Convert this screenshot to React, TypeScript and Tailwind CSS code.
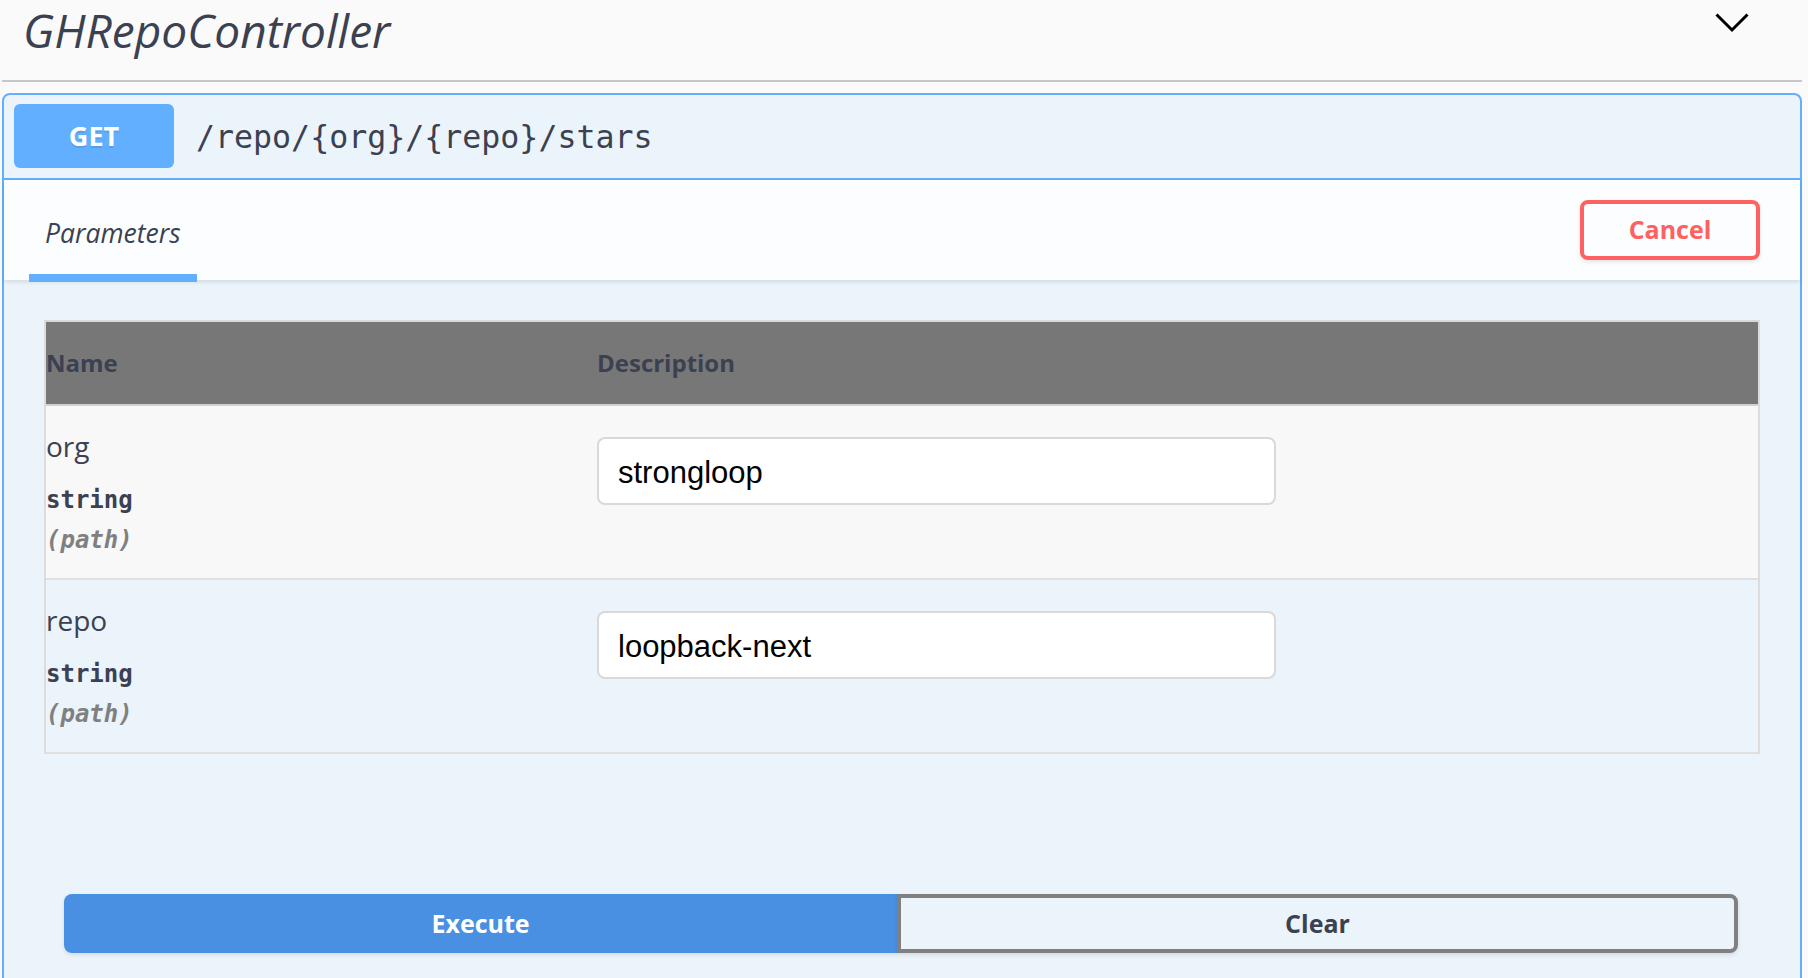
import React from "react";

const sans = "font-['Open_Sans',sans-serif]";
const mono = "font-['DejaVu_Sans_Mono',monospace]";

function ParamRow({ name, value, shaded }: { name: string; value: string; shaded: boolean }) {
  return (
    <div
      className={`grid grid-cols-[551px_1fr] pt-[20px] pb-[18px] border-b-2 border-[#e0e0e0] ${
        shaded ? "bg-[#f8f8f8]" : ""
      }`}
    >
      <div className="flex flex-col">
        <div className={`${sans} text-[28px] leading-[40px] text-[#3b4151]`}>{name}</div>
        <div className={`${mono} mt-[14px] text-[24px] leading-[40px] font-bold text-[#3b4151]`}>string</div>
        <div className={`${mono} text-[24px] leading-[40px] font-bold italic text-[#808080]`}>(path)</div>
      </div>
      <div>
        <div className="mt-[11px] flex h-[68px] w-[679px] items-center rounded-[8px] border-2 border-[#d9d9d9] bg-white pl-[19px] pt-[4px] font-['Liberation_Sans',Arial,sans-serif] text-[31px] text-black">
          {value}
        </div>
      </div>
    </div>
  );
}

export default function App() {
  return (
    <div className="h-[978px] w-[1808px] overflow-hidden bg-[#fafafa]">
      <div className="ml-[2px] flex w-[1800px] flex-col">
        {/* Tag header */}
        <div className="flex h-[82px] shrink-0 items-start justify-between border-b-2 border-[#c6c7cb] pl-[21px] pr-[53px]">
          <h3 className={`${sans} text-[46px] italic font-normal leading-[60px] text-[#3b4151]`}>GHRepoController</h3>
          <svg width="34" height="20" viewBox="0 0 34 20" className="mt-[13px]">
            <polyline points="1.5,1.5 17,17 32.5,1.5" fill="none" stroke="#000" strokeWidth="3" />
          </svg>
        </div>

        {/* Operation block */}
        <div className="mt-[11px] flex h-[960px] shrink-0 flex-col rounded-[8px] border-2 border-[#61affe] bg-[#ebf3fb]">
          {/* Summary */}
          <div className="flex items-center border-b-2 border-[#61affe] px-[10px] pt-[9px] pb-[10px]">
            <div
              className={`${sans} flex h-[64px] w-[160px] items-center justify-center rounded-[6px] bg-[#61affe] text-[27px] font-bold text-white [text-shadow:0_2px_0_rgba(0,0,0,0.1)]`}
            >
              GET
            </div>
            <div className={`${mono} ml-[22px] pt-[4px] text-[31.6px] text-[#3b4151]`}>/repo/&#123;org&#125;/&#123;repo&#125;/stars</div>
          </div>

          {/* Section header */}
          <div className="relative z-10 flex h-[100px] items-center justify-between bg-[#fbfdfe] pl-[25px] pr-[40px] shadow-[0_2px_4px_rgba(0,0,0,0.1)]">
            <div className="relative flex self-stretch items-center px-[16px] pt-[6px]">
              <span className={`${sans} text-[26.5px] italic leading-[36px] text-[#3b4151]`}>Parameters</span>
              <div className="absolute bottom-[-2px] left-0 right-0 h-[8px] bg-[#61affe]" />
            </div>
            <button
              className={`${sans} h-[60px] w-[180px] rounded-[8px] border-4 border-[#ff6060] bg-transparent text-[25px] font-bold text-[#ff6060] shadow-[0_2px_4px_rgba(0,0,0,0.1)]`}
            >
              Cancel
            </button>
          </div>

          {/* Parameters table */}
          <div className="px-[40px] pt-[40px]">
            <div className="border-x-2 border-[#dcdcdc]">
              <div
                className={`${sans} grid h-[86px] grid-cols-[551px_1fr] items-center border-y-2 border-t-[#d9d9d9] border-b-[#cfd1d6] bg-[#777777] text-[24px] font-bold text-[#3b4151]`}
              >
                <div>Name</div>
                <div>Description</div>
              </div>
              <ParamRow name="org" value="strongloop" shaded={true} />
              <ParamRow name="repo" value="loopback-next" shaded={false} />
            </div>
          </div>

          {/* Execute / Clear */}
          <div className="flex pl-[60px] pr-[62px] pt-[140px]">
            <button
              className={`${sans} h-[59px] flex-1 rounded-l-[8px] bg-[#4990e2] text-[25px] font-bold text-white shadow-[0_2px_4px_rgba(0,0,0,0.1)]`}
            >
              Execute
            </button>
            <button
              className={`${sans} h-[59px] flex-1 rounded-r-[8px] border-4 border-[#808080] bg-transparent text-[25px] font-bold text-[#3b4151] shadow-[0_2px_4px_rgba(0,0,0,0.1)]`}
            >
              Clear
            </button>
          </div>
        </div>
      </div>
    </div>
  );
}
